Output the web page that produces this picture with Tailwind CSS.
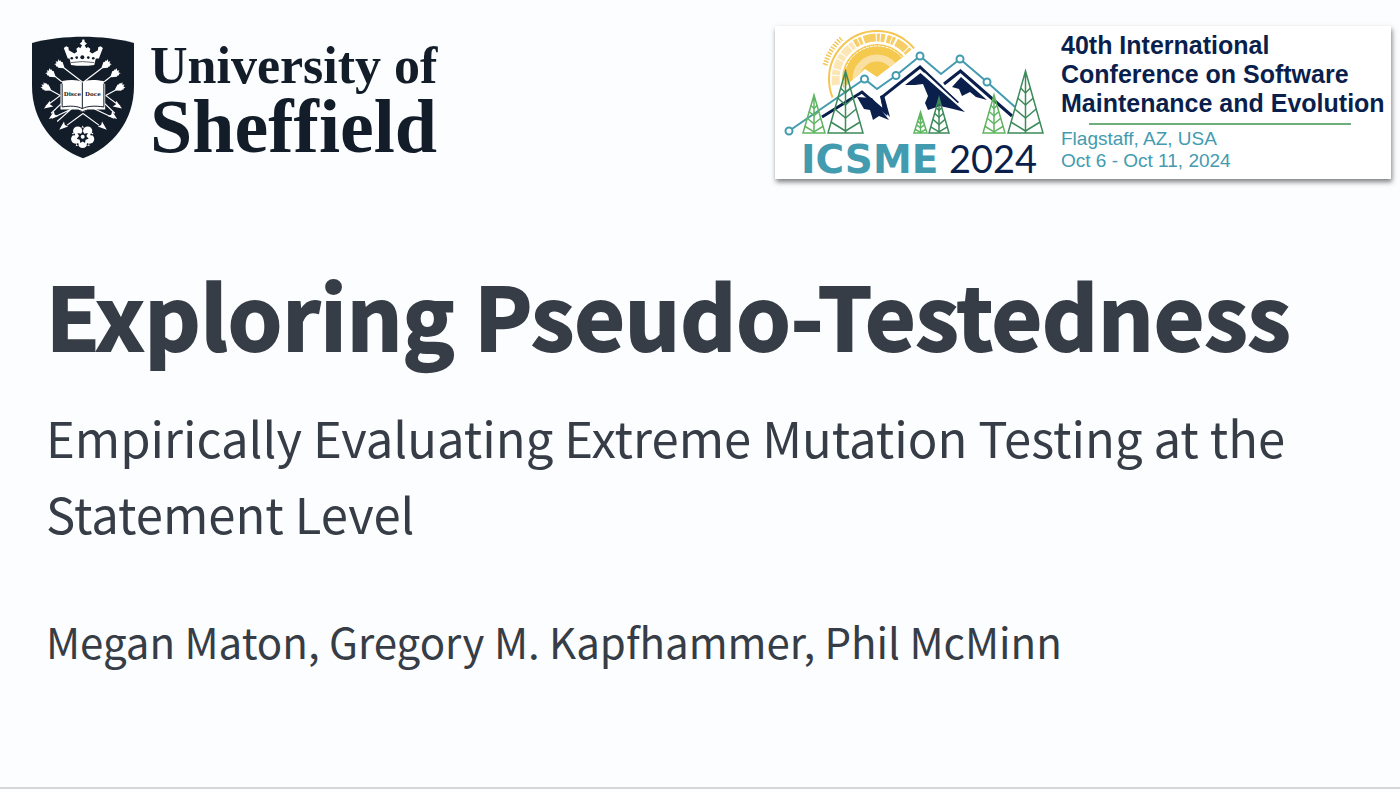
<!DOCTYPE html>
<html lang="en">
<head>
<meta charset="utf-8">
<meta name="viewport" content="width=device-width, initial-scale=1">
<title>Exploring Pseudo-Testedness</title>
<script src="https://cdn.jsdelivr.net/npm/@tailwindcss/browser@4"></script>
</head>
<body class="flex min-h-screen flex-col bg-[#fcfdff] font-['Noto_Sans_CJK_SC','Noto_Sans',sans-serif] text-[#373d46]">
<header class="flex items-start justify-between pt-[26px] pr-[9px] pl-8">
  <div class="flex gap-4 pt-[10px] text-[#131d29]">
    <svg class="h-[123px] w-[102px] shrink-0" viewBox="36 35 308 369" role="img" aria-label="University crest">
      <path fill="currentColor" d="M36 55C80 42 140 36 190 36s110 6 154 19v130c0 105-64 185-154 218C100 370 36 290 36 185z"/>
      <defs>
        <g id="fletch" fill="#fff">
          <path d="M-9-10l5 2 3-3 5 2 3-2 14 9v4L7 11l-3-2-5 2-3-3-5 2 4-7-6-3 6-3z"/>
        </g>
        <g id="head" fill="#fff"><path d="M14 0L-13-10l5 10-5 10z"/></g>
      </defs>
      <g stroke="#fff" stroke-width="3.500" fill="none">
        <path d="M114 116L190 174L266 116M88 142L126 172M292 142L254 172M72 186L120 213M308 186L260 213M122 213L78 246M125 237L94 267M155 254L112 292M258 213L302 246M255 237L286 267M190 268L142 303M190 268L238 303M155 254L96 282M225 254L284 282"/>
      </g>
      <g>
        <use href="#fletch" transform="translate(116 117) rotate(38)"/>
        <use href="#fletch" transform="translate(89 144) rotate(38)"/>
        <use href="#fletch" transform="translate(74 186) rotate(30)"/>
        <use href="#fletch" transform="translate(264 117) rotate(142)"/>
        <use href="#fletch" transform="translate(291 144) rotate(142)"/>
        <use href="#fletch" transform="translate(306 186) rotate(150)"/>
        <use href="#head" transform="translate(84 245) rotate(148)"/>
        <use href="#head" transform="translate(98 276) rotate(142)"/>
        <use href="#head" transform="translate(129 308) rotate(140)"/>
        <use href="#head" transform="translate(296 245) rotate(32)"/>
        <use href="#head" transform="translate(282 276) rotate(38)"/>
        <use href="#head" transform="translate(251 308) rotate(40)"/>
      </g>
      <path fill="#fff" d="M122 178h5v-8c24-5 48-5 61 4 13-9 37-9 65-4v8h4v78h-55c-5 10-20 10-25 0h-55z"/>
      <path d="M127 178v70c24-4 46-3 61 5 15-8 40-9 65-5v-70M188 174v79" stroke="currentColor" stroke-width="3" fill="none"/>
      <path d="M178 258q10 9 22 0" stroke="currentColor" stroke-width="3" fill="none"/>
      <g fill="currentColor" class="font-['DejaVu_Serif',serif] text-[17px] font-bold">
        <text x="158" y="214" text-anchor="middle">Disce</text>
        <text x="220" y="214" text-anchor="middle">Doce</text>
      </g>
      <path fill="#fff" d="M144 102L132 70l7-5 7 3 1 9 17 10 8-6-2-9 7-5 5 4 5-9-7-5 7-6 1-7 6 0 1 7 7 6-7 5 5 9 5-4 7 5-2 9 8 6 17-10 1-9 7-3 7 5-12 32z"/>
      <path fill="#fff" d="M148 96q40-10 82 0l-6 25q-35 6-70 0z"/>
      <path d="M154 114q34-6 69 0" stroke="currentColor" stroke-width="2" fill="none"/>
      <g fill="currentColor"><circle cx="156" cy="101" r="4"/><circle cx="171" cy="99" r="4"/><circle cx="188" cy="98" r="6"/><circle cx="206" cy="99" r="4"/><circle cx="221" cy="101" r="4"/></g>
      <g transform="translate(189 338)">
        <g fill="#fff">
          <path d="M0-34l5 10h-10zM33-11l-8 9-4-10zM-33-11l8 9 4-10zM21 29l-11-4 8-8zM-21 29l11-4-8-8z"/>
          <circle cx="15" cy="-17" r="14"/><circle cx="-15" cy="-17" r="14"/><circle cx="21" cy="7" r="14"/><circle cx="-21" cy="7" r="14"/><circle cx="0" cy="20" r="14"/><circle r="16"/>
        </g>
        <path fill="currentColor" d="M0-17l5 8 11-2-5 9 7 8-9 3-2 10-7-5-7 5-2-10-9-3 7-8-5-9 11 2z"/>
        <circle r="6" fill="#fff"/>
        <g fill="currentColor"><circle cy="-25" r="3"/><circle cx="26" cy="-7" r="3"/><circle cx="-26" cy="-7" r="3"/><circle cx="15" cy="23" r="3"/><circle cx="-15" cy="23" r="3"/></g>
      </g>
    </svg>
    <div class="flex flex-col font-['Liberation_Serif',serif] font-bold whitespace-nowrap">
      <span class="text-[52px] leading-[60px]">University of</span>
      <span class="text-[76px] leading-[60px]">Sheffield</span>
    </div>
  </div>

  <section class="flex w-[616px] shrink-0 bg-white shadow-[1px_3px_5px_rgba(0,0,0,0.5)]" aria-label="Conference">
    <svg class="h-[153px] w-[286px] shrink-0 overflow-visible" viewBox="775 26 286 153" role="img" aria-label="ICSME 2024" fill="none">
      <defs>
        <clipPath id="sky"><path d="M815 20H925V40L877 77L865 69L848 84L832 98H815z"/></clipPath>
        <symbol id="tree" viewBox="0 0 36 62" preserveAspectRatio="none" overflow="visible">
          <g stroke="currentColor" fill="none" stroke-width="1.500">
            <path vector-effect="non-scaling-stroke" d="M18 0L36 62H0zM18 0V62"/>
            <path vector-effect="non-scaling-stroke" d="M13 17L18 22L23 17M10 27L18 34L26 27M7 38L18 47L29 38M3 51L18 60L33 51"/>
          </g>
        </symbol>
      </defs>
      <g clip-path="url(#sky)">
        <circle cx="877" cy="79" r="35" fill="#f5c84e"/>
        <circle cx="877" cy="79" r="21" stroke="#fae0a0" stroke-width="7"/>
        <circle cx="877" cy="79" r="33" stroke="#fff" stroke-width="1" stroke-dasharray="3 1"/>
        <circle cx="877" cy="79" r="48" stroke="#f5c653" stroke-width="2"/>
        <path d="M836 85A41 41 0 0 1 854 45" stroke="#fbe6b4" stroke-width="8" stroke-dasharray="9 1 5 1"/>
        <path d="M855 44A41 41 0 0 1 913 59" stroke="#f7ce66" stroke-width="8" stroke-dasharray="4 1 3 2 12 1 3 1 4 2"/>
      </g>
      <path d="M825 65A54 54 0 0 1 842 38" stroke="#f5c653" stroke-width="5" stroke-dasharray="1.500 1.500"/>
      <g stroke="#0b1f4d" stroke-width="3">
        <path d="M822 117L862 92L885 112L882 97L920 67L958 103"/>
        <path d="M944 84L960.500 71L1012 116"/>
      </g>
      <g fill="#0b1f4d">
        <path d="M857 97L872 98L889 120L879 116L873 120L870 110L864 109z"/>
        <path d="M880 96L884 95L890 117L883 110z"/>
        <path d="M905 85L920.500 73L965 112L949 108L940 106L928 110L925 103L928 96L923 84L915 85z"/>
        <path d="M952 87L961 77L987 100L976 97L970 92L962 96L959 89z"/>
      </g>
      <path d="M924 73L962 108M943 86L966 107" stroke="#fff" stroke-width="1.500"/>
      <path d="M789 131L864.500 79L877 89L896 75.500L920 56L941 74L960 59L987 82L1015 107" stroke="#439bb0" stroke-width="2"/>
      <g fill="#fff" stroke="#439bb0" stroke-width="2">
        <circle cx="789" cy="131" r="3.500"/><circle cx="864.500" cy="79" r="3.500"/><circle cx="896" cy="75.500" r="3.500"/><circle cx="920" cy="56" r="3.500"/><circle cx="960" cy="59" r="3.500"/><circle cx="987" cy="82" r="3.500"/>
      </g>
      <use href="#tree" x="803" y="95" width="22" height="38" color="#5fb562"/>
      <use href="#tree" x="828" y="71" width="35" height="62" color="#3d8a5a"/>
      <use href="#tree" x="914" y="112" width="13" height="21" color="#5fb562"/>
      <use href="#tree" x="929" y="98" width="20" height="35" color="#3d8a5a"/>
      <use href="#tree" x="983" y="95" width="22" height="38" color="#5fb562"/>
      <use href="#tree" x="1008" y="71" width="35" height="62" color="#3d8a5a"/>
      <text x="801" y="173" fill="#439bb0" class="font-['DejaVu_Sans',sans-serif] text-[39px] font-bold">ICSME</text>
      <text x="949" y="173" fill="#0b1f4d" class="font-['Lato',sans-serif] text-[38px]">2024</text>
    </svg>
    <div class="flex flex-1 flex-col pt-[5px] font-['Liberation_Sans',sans-serif] whitespace-nowrap">
      <p class="text-[25px] leading-[29px] font-bold text-[#0b1f4d]">40th International<br>Conference on Software<br>Maintenance and Evolution</p>
      <hr class="mt-[5px] mr-10 ml-7 border-t-2 border-[#6fae7c]">
      <p class="mt-[3px] text-[19px] leading-[22px] text-[#439bb0]">Flagstaff, AZ, USA<br>Oct 6 - Oct 11, 2024</p>
    </div>
  </section>
</header>

<main class="flex-1 px-[46px]">
  <h1 class="mt-[86px] text-[87px] leading-[96px] font-bold whitespace-nowrap [-webkit-text-stroke:2px_#373d46]">Exploring Pseudo-Testedness</h1>
  <p class="mt-[38px] text-[49px] leading-[76px]">Empirically Evaluating Extreme Mutation Testing at the Statement Level</p>
  <p class="mt-[58px] text-[42px] leading-[64px]">Megan Maton, Gregory M. Kapfhammer, Phil McMinn</p>
</main>
<footer class="h-[5px] border-t-2 border-[#d5d8d9]"></footer>
</body>
</html>
